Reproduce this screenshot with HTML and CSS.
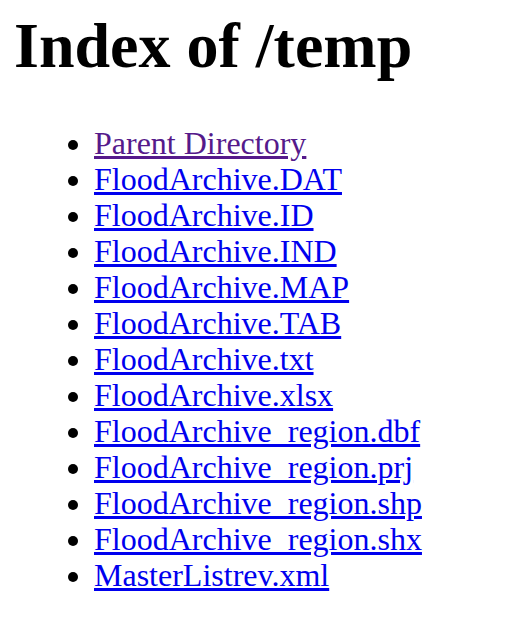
FILE: index.html
```html
<!DOCTYPE html>
<html>
<head>
<meta charset="utf-8">
<title>Index of /temp</title>
<link rel="stylesheet" href="styles.css">
</head>
<body class="page">
<h1 class="title">Index of /temp</h1>
<ul class="listing">
<li><a class="entry visited" href="#parent">Parent Directory</a></li>
<li><a class="entry" href="#dat">FloodArchive.DAT</a></li>
<li><a class="entry" href="#id">FloodArchive.ID</a></li>
<li><a class="entry" href="#ind">FloodArchive.IND</a></li>
<li><a class="entry" href="#map">FloodArchive.MAP</a></li>
<li><a class="entry" href="#tab">FloodArchive.TAB</a></li>
<li><a class="entry" href="#txt">FloodArchive.txt</a></li>
<li><a class="entry" href="#xlsx">FloodArchive.xlsx</a></li>
<li><a class="entry" href="#dbf">FloodArchive_region.dbf</a></li>
<li><a class="entry" href="#prj">FloodArchive_region.prj</a></li>
<li><a class="entry" href="#shp">FloodArchive_region.shp</a></li>
<li><a class="entry" href="#shx">FloodArchive_region.shx</a></li>
<li><a class="entry" href="#xml">MasterListrev.xml</a></li>
</ul>
</body>
</html>
```
FILE: styles.css
```css
html, body {
  background: #fff;
}
.page {
  margin: 9px 16px 16px 14px;
  font-family: "Liberation Serif", "Times New Roman", serif;
  font-size: 32px;
  color: #000;
}
.title {
  font-size: 64px;
  font-weight: bold;
  margin: 0 0 42px 0;
}
.listing {
  margin: 0;
  padding-left: 80px;
  list-style: disc;
  line-height: 36px;
}
.entry {
  color: #0000ee;
  text-decoration: underline;
}
.entry.visited {
  color: #551a8b;
}
```
